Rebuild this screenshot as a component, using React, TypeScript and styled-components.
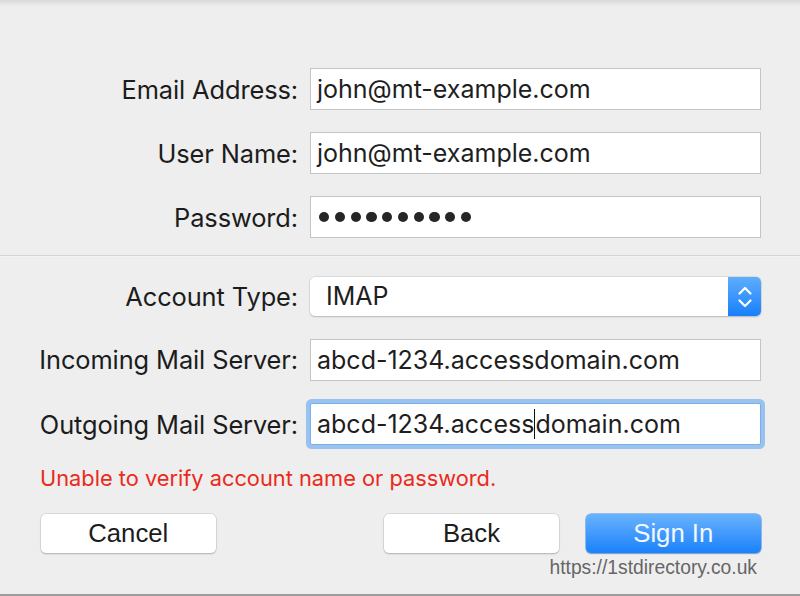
import React from "react";
import styled, { createGlobalStyle } from "styled-components";

const Global = createGlobalStyle`
  html, body { margin: 0; padding: 0; background: #eeeeee; }
  * { box-sizing: border-box; }
`;

const Window = styled.div`
  width: 800px;
  height: 596px;
  background: #eeeeee;
  font-family: Inter, "Liberation Sans", sans-serif;
  color: #1e1e1e;
  position: relative;
  overflow: hidden;
  display: flex;
  flex-direction: column;
  border-bottom: 2px solid #9c9c9c;
`;

const TopShade = styled.div`
  height: 6px;
  background: linear-gradient(#d8d8d8, #eeeeee);
  flex: none;
`;

const Section = styled.div<{ $top: number; $bottom: number; $gap: number }>`
  display: grid;
  grid-template-columns: 298px 451px;
  column-gap: 12px;
  row-gap: ${(p) => p.$gap}px;
  padding-top: ${(p) => p.$top}px;
  padding-bottom: ${(p) => p.$bottom}px;
  align-items: center;
`;

const Divider = styled.div`
  height: 2px;
  border-top: 1px solid #d4d4d4;
  border-bottom: 1px solid #f4f4f4;
`;

const Label = styled.label`
  text-align: right;
  font-size: 25.4px;
  letter-spacing: -0.1px;
  color: #1c1c1c;
  white-space: nowrap;
`;

const Field = styled.div<{ $focused?: boolean }>`
  height: 42px;
  background: #ffffff;
  border: 1px solid ${(p) => (p.$focused ? "#7aaee8" : "#c4c4c4")};
  box-shadow: ${(p) => (p.$focused ? "0 0 0 4px #98c3f0" : "none")};
  border-radius: ${(p) => (p.$focused ? "2px" : "0")};
  display: flex;
  align-items: center;
  padding-left: 6px;
  font-size: 25px;
  color: #1e1e1e;
  white-space: nowrap;
`;

const Dots = styled.div`
  display: flex;
  gap: 5.6px;
  padding-left: 2px;
`;

const Dot = styled.span`
  width: 10.2px;
  height: 10.2px;
  border-radius: 50%;
  background: #262626;
`;

const Caret = styled.span`
  display: inline-block;
  width: 1px;
  height: 30px;
  background: #111;
`;

const Select = styled.div`
  height: 39px;
  background: #ffffff;
  border-radius: 5px;
  box-shadow: 0 0 0 0.5px #c8c8c8, 0 1px 1.5px rgba(0, 0, 0, 0.25);
  display: flex;
  align-items: center;
  justify-content: space-between;
  overflow: hidden;
  font-size: 25px;
`;

const SelectValue = styled.span`
  padding-left: 16px;
  padding-bottom: 2px;
`;

const Stepper = styled.div`
  width: 33px;
  height: 100%;
  background: linear-gradient(#5fadfc, #1780fb);
  display: flex;
  align-items: center;
  justify-content: center;
`;

const ErrorText = styled.div`
  color: #ea2a1c;
  font-size: 21.8px;
  padding-left: 40px;
  margin-top: 20px;
  height: 26px;
  line-height: 26px;
`;

const ButtonRow = styled.div`
  display: flex;
  align-items: center;
  padding: 0 39px 0 41px;
  margin-top: 23px;
`;

const Button = styled.button<{ $primary?: boolean }>`
  width: 175px;
  height: 39px;
  padding: 0;
  border: none;
  border-radius: 5px;
  display: flex;
  align-items: center;
  justify-content: center;
  cursor: default;
  color: ${(p) => (p.$primary ? "#f4f8ff" : "#1c1c1c")};
  background: ${(p) =>
    p.$primary ? "linear-gradient(#6ab2fd, #1a82fb)" : "#ffffff"};
  box-shadow: ${(p) =>
    p.$primary
      ? "0 0 0 0.5px #3d8de8, 0 1px 1.5px rgba(0,0,0,0.25)"
      : "0 0 0 0.5px #c6c6c6, 0 1px 1.5px rgba(0,0,0,0.3)"};
`;

const ButtonText = styled.span`
  display: inline-block;
  font-family: "Liberation Sans", Arial, sans-serif;
  font-size: 26.5px;
  transform: scaleX(0.97);
`;

const Spacer = styled.div`
  flex: 1;
`;

const Gap = styled.div`
  width: 27px;
`;

const Credit = styled.div`
  display: flex;
  justify-content: flex-end;
  padding-right: 43px;
  margin-top: 4px;
`;

const CreditText = styled.span`
  display: inline-block;
  font-family: "Liberation Sans", Arial, sans-serif;
  font-size: 19.3px;
  color: #666666;
`;

const StepperIcon = () => (
  <svg width="16" height="26" viewBox="0 0 16 26" fill="none">
    <path d="M2.5 9.5 L8 4 L13.5 9.5" stroke="#fff" strokeWidth="2.2" strokeLinecap="round" strokeLinejoin="round" />
    <path d="M2.5 16.5 L8 22 L13.5 16.5" stroke="#fff" strokeWidth="2.2" strokeLinecap="round" strokeLinejoin="round" />
  </svg>
);

export default function App() {
  return (
    <>
      <Global />
      <Window>
        <TopShade />
        <Section $top={62} $bottom={17} $gap={22}>
          <Label>Email Address:</Label>
          <Field>john@mt-example.com</Field>
          <Label>User Name:</Label>
          <Field>john@mt-example.com</Field>
          <Label>Password:</Label>
          <Field>
            <Dots>
              {Array.from({ length: 10 }).map((_, i) => (
                <Dot key={i} />
              ))}
            </Dots>
          </Field>
        </Section>
        <Divider />
        <Section $top={20} $bottom={0} $gap={22.5}>
          <Label>Account Type:</Label>
          <Select>
            <SelectValue>IMAP</SelectValue>
            <Stepper>
              <StepperIcon />
            </Stepper>
          </Select>
          <Label>Incoming Mail Server:</Label>
          <Field>abcd-1234.accessdomain.com</Field>
          <Label>Outgoing Mail Server:</Label>
          <Field $focused>
            abcd-1234.access
            <Caret />
            domain.com
          </Field>
        </Section>
        <ErrorText>Unable to verify account name or password.</ErrorText>
        <ButtonRow>
          <Button>
            <ButtonText>Cancel</ButtonText>
          </Button>
          <Spacer />
          <Button>
            <ButtonText>Back</ButtonText>
          </Button>
          <Gap />
          <Button $primary>
            <ButtonText>Sign In</ButtonText>
          </Button>
        </ButtonRow>
        <Credit>
          <CreditText>https://1stdirectory.co.uk</CreditText>
        </Credit>
      </Window>
    </>
  );
}
